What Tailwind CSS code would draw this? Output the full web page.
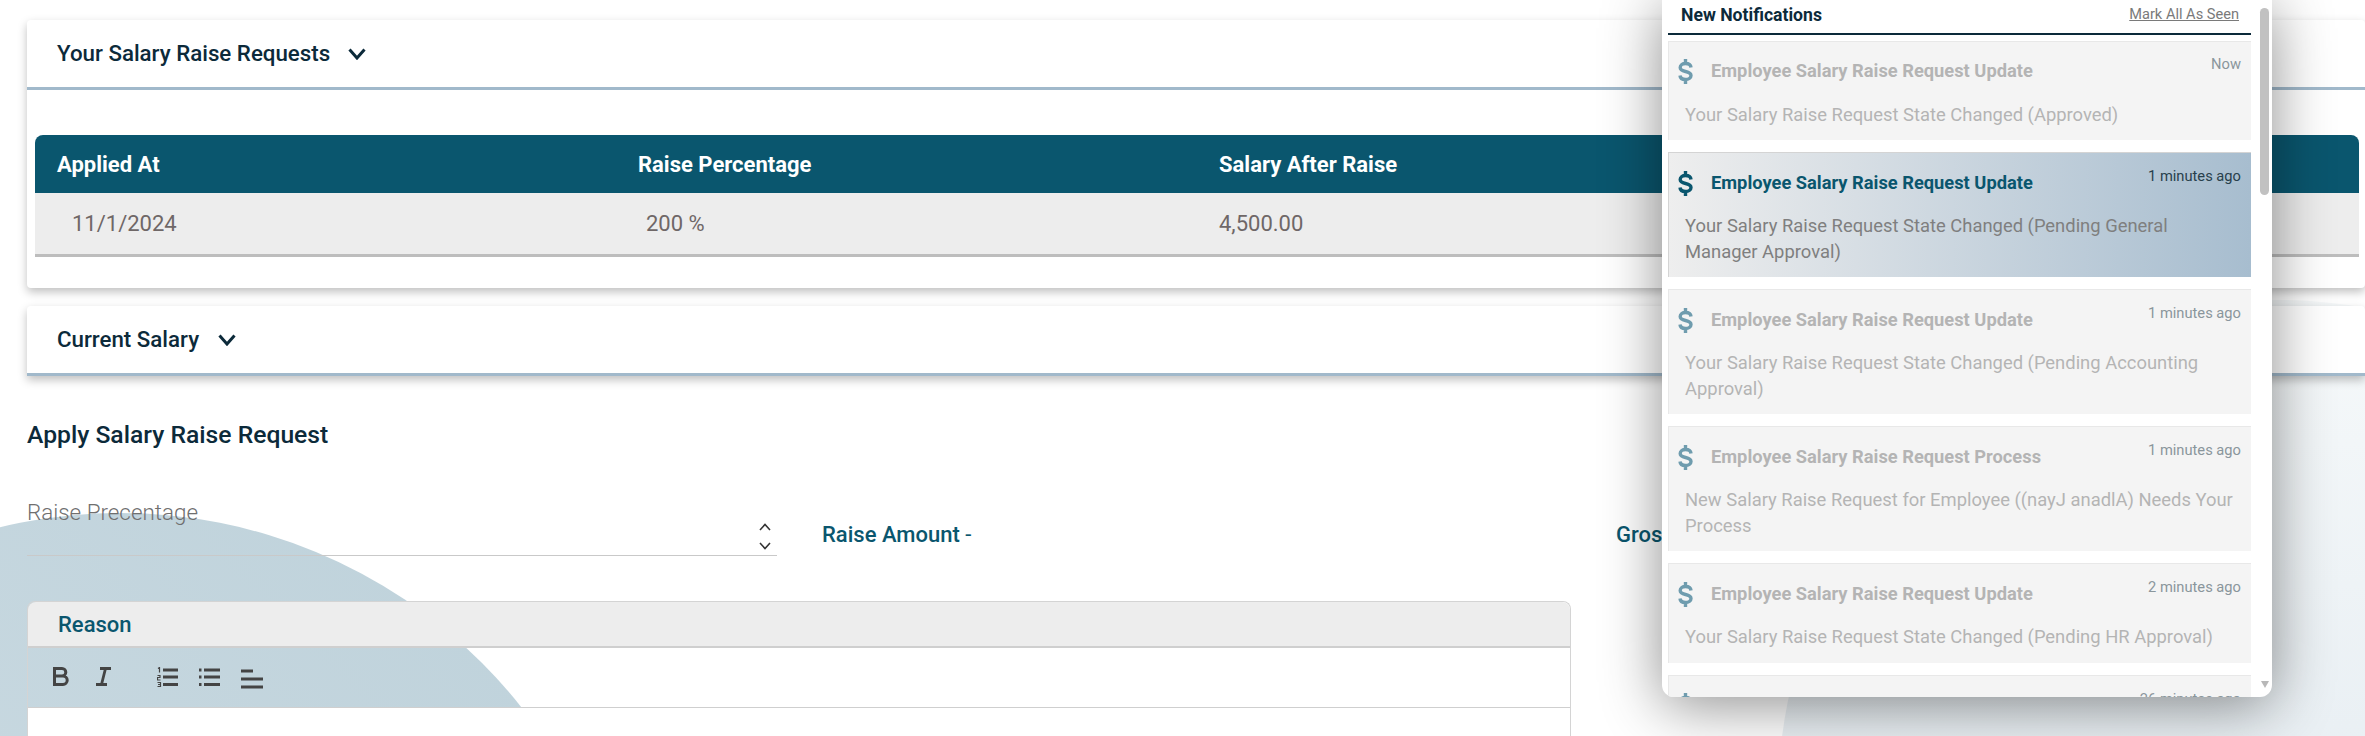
<!DOCTYPE html>
<html lang="en">
  <head>
    <meta charset="UTF-8" />
    <title>Salary Raise</title>
    <script src="https://cdn.jsdelivr.net/npm/@tailwindcss/browser@4"></script>
  </head>
  <body class="relative h-[736px] w-[2365px] overflow-hidden bg-white font-['Roboto',sans-serif]">
    <!-- background shapes -->
    <div class="absolute left-[-392px] top-[513px] h-[1024px] w-[1024px] rounded-full bg-gradient-to-tr from-[#d3e0e7] to-[#bdd1da]"></div>
    <div class="absolute left-[1778px] top-[300px] h-[1000px] w-[1000px] rounded-full bg-gradient-to-b from-[#f6f9fa] to-[#dae4ec]"></div>

    <div class="relative flex h-[736px] flex-col overflow-hidden pl-[27px] pt-[20px]">
      <!-- requests card -->
      <section class="h-[268px] w-[2338px] shrink-0 rounded-[4px] bg-white shadow-[0_4px_10px_rgba(0,0,0,0.25)]">
        <div class="flex h-[67px] items-center gap-[18px] pl-[30px] text-[22.3px] font-medium text-[#0c2a3a]">
          <span>Your Salary Raise Requests</span>
          <svg width="18" height="12" viewBox="0 0 18 12" fill="none" stroke="#0c2a3a" stroke-width="3"><path d="M1.500 1.500L9 10l7.500-8.500" /></svg>
        </div>
        <div class="h-[3px] bg-[#a1b9cb]"></div>
        <div class="ml-[8px] mr-[6px] mt-[45px]">
          <div class="grid h-[58px] grid-cols-[581px_581px_1fr] items-center rounded-t-[8px] bg-[#0a566e] pl-[22px] text-[22px] font-bold text-white">
            <span>Applied At</span><span>Raise Percentage</span><span>Salary After Raise</span>
          </div>
          <div class="grid h-[64px] grid-cols-[581px_581px_1fr] items-center border-b-[3px] border-[#bdbdbd] bg-[#ededed] pl-[22px] text-[22px] text-[#6f6767]">
            <span class="pl-[15px]">11/1/2024</span><span class="pl-[8px]">200 %</span><span>4,500.00</span>
          </div>
        </div>
      </section>

      <!-- current salary card -->
      <section class="mt-[18px] w-[2338px] shrink-0 rounded-t-[4px] bg-white shadow-[0_4px_10px_rgba(0,0,0,0.25)]">
        <div class="flex h-[67px] items-center gap-[19px] pl-[30px] text-[22.3px] font-medium text-[#0c2a3a]">
          <span>Current Salary</span>
          <svg width="18" height="12" viewBox="0 0 18 12" fill="none" stroke="#0c2a3a" stroke-width="3"><path d="M1.500 1.500L9 10l7.500-8.500" /></svg>
        </div>
        <div class="h-[3px] bg-[#a1b9cb]"></div>
      </section>

      <h2 class="mt-[44px] shrink-0 text-[24.7px] font-medium leading-[30px] text-[#0c2a3a]">Apply Salary Raise Request</h2>

      <!-- raise form row -->
      <div class="mt-[40px] flex h-[66px] shrink-0 items-start">
        <div class="relative h-[66px] w-[750px] border-b border-[#c9c9c9]">
          <span class="absolute left-0 top-[7px] text-[22.4px] font-light leading-[30px] text-[#6f6f6f]">Raise Precentage</span>
          <div class="absolute bottom-[5px] right-[6px] flex w-[12px] flex-col items-center gap-[11px]">
            <svg width="12" height="8" viewBox="0 0 12 8" fill="none" stroke="#333" stroke-width="1.6"><path d="M1 7l5-5.500L11 7" /></svg>
            <svg width="12" height="8" viewBox="0 0 12 8" fill="none" stroke="#333" stroke-width="1.6"><path d="M1 1l5 5.500L11 1" /></svg>
          </div>
        </div>
        <div class="ml-[45px] mt-[30px] w-[794px] text-[22px] font-medium leading-[30px] text-[#0a566e]">Raise Amount <span class="font-normal">-</span></div>
        <div class="mt-[30px] text-[22px] font-medium leading-[30px] text-[#0a566e]">Gross</div>
      </div>

      <!-- reason editor -->
      <div class="mt-[45px] w-[1544px] shrink-0 rounded-t-[8px] border-x border-t border-[#d4d4d4]">
        <div class="flex h-[46px] items-center rounded-t-[8px] border-b-2 border-[#cfcfcf] bg-[#ededed] pl-[30px] text-[22px] font-medium text-[#0a566e]">Reason</div>
        <div class="flex h-[60px] items-start border-b border-[#cfcfcf] pl-[25px] pt-[19px]">
          <svg width="16" height="19" viewBox="0 0 16 19" fill="none" stroke="#444" stroke-width="3"><path d="M1.500 1.500h7.500a3.800 3.800 0 010 7.600H1.500zM1.500 9.100h8.500a4.200 4.200 0 010 8.400H1.500z" /></svg>
          <svg class="ml-[27px]" width="15" height="19" viewBox="0 0 15 19" fill="none" stroke="#444" stroke-width="2.800"><path d="M4 1.500h11M0 17.500h11M9.500 1.500l-4 16" /></svg>
          <svg class="ml-[46px]" width="21" height="20" viewBox="0 0 21 20" fill="none" stroke="#444"><path d="M6 3h15M6 10h15M6 17.500h15" stroke-width="2.800" /><path d="M1 1.500l1.500-1v5M.5 8.500h2.500v2H.5v2.500h3M.5 15.500h3v4h-3M1 17.500h2.500" stroke-width="1.200" /></svg>
          <svg class="ml-[21px]" width="21" height="20" viewBox="0 0 21 20" fill="none" stroke="#444" stroke-width="2.800"><path d="M5 3h16M5 10h16M5 17.500h16M0 3h2.500M0 10h2.500M0 17.500h2.500" /></svg>
          <svg class="ml-[21px] mt-[2px]" width="22" height="20" viewBox="0 0 22 20" fill="none" stroke="#444" stroke-width="3"><path d="M0 2h12M0 10h22M0 18h22" /></svg>
        </div>
        <div class="h-[40px] bg-white"></div>
      </div>
    </div>

    <!-- notifications dropdown -->
    <aside class="absolute left-[1662px] top-0 h-[697px] w-[610px] overflow-hidden rounded-b-[12px] bg-white pl-[6px] shadow-[0_8px_60px_rgba(0,0,0,0.45)]">
      <div class="mr-[21px] flex h-[35px] items-center justify-between border-b-2 border-[#0c2a3a] pb-[3px] pl-[13px] pr-[12px]">
        <span class="text-[17.6px] font-bold text-[#0c2a3a]">New Notifications</span>
        <span class="text-[14.6px] text-[#7a7a7a] underline">Mark All As Seen</span>
      </div>
      <div class="mr-[21px] flex flex-col gap-[12px] pt-[6px]">
        <article class="h-[99px] border-l border-t border-[#e8e8e8] bg-[#f4f4f4] pl-[9px] pr-[10px] pt-[8px]">
          <header class="flex items-start">
            <svg class="mt-[9px] shrink-0" width="15" height="25" viewBox="0 0 15 25" fill="none" stroke="#6f9cae" stroke-width="3.400"><path d="M13 8.500C12.800 5.800 10.500 4.500 7.500 4.500 4.500 4.500 2.200 6 2.200 8.500c0 2.500 2.300 3.300 5.300 4 3 .7 5.500 1.500 5.500 4 0 2.500-2.500 4-5.500 4-3 0-5.300-1.500-5.500-4M7.500 0v4.500M7.500 20.500V25" /></svg>
            <h3 class="ml-[18px] mt-[7px] flex-1 text-[18.3px] font-bold text-[#b4b4b4]">Employee Salary Raise Request Update</h3>
            <time class="mt-[3px] text-[14.7px] text-[#8a969c]">Now</time>
          </header>
          <p class="mt-[18px] pl-[7px] pr-[4px] text-[18.4px] leading-[26px] text-[#b4b4b4]">Your Salary Raise Request State Changed (Approved)</p>
        </article>
        <article class="h-[125px] border-l border-t border-[#d4d4d4] bg-gradient-to-r from-[#eeeeee] to-[#a7bdcf] pl-[9px] pr-[10px] pt-[8px]">
          <header class="flex items-start">
            <svg class="mt-[10px] shrink-0" width="15" height="25" viewBox="0 0 15 25" fill="none" stroke="#0a566e" stroke-width="3.400"><path d="M13 8.500C12.800 5.800 10.500 4.500 7.500 4.500 4.500 4.500 2.200 6 2.200 8.500c0 2.500 2.300 3.300 5.300 4 3 .7 5.500 1.500 5.500 4 0 2.500-2.500 4-5.500 4-3 0-5.300-1.500-5.500-4M7.500 0v4.500M7.500 20.500V25" /></svg>
            <h3 class="ml-[18px] mt-[8px] flex-1 text-[18.3px] font-bold text-[#0a566e]">Employee Salary Raise Request Update</h3>
            <time class="mt-[4px] text-[14.7px] text-[#28404c]">1 minutes ago</time>
          </header>
          <p class="mt-[17px] pl-[7px] pr-[4px] text-[18.4px] leading-[26px] text-[#7f7f7f]">Your Salary Raise Request State Changed (Pending General Manager Approval)</p>
        </article>
        <article class="h-[125px] border-l border-t border-[#e8e8e8] bg-[#f4f4f4] pl-[9px] pr-[10px] pt-[8px]">
          <header class="flex items-start">
            <svg class="mt-[10px] shrink-0" width="15" height="25" viewBox="0 0 15 25" fill="none" stroke="#6f9cae" stroke-width="3.400"><path d="M13 8.500C12.800 5.800 10.500 4.500 7.500 4.500 4.500 4.500 2.200 6 2.200 8.500c0 2.500 2.300 3.300 5.300 4 3 .7 5.500 1.500 5.500 4 0 2.500-2.500 4-5.500 4-3 0-5.300-1.500-5.500-4M7.500 0v4.500M7.500 20.500V25" /></svg>
            <h3 class="ml-[18px] mt-[8px] flex-1 text-[18.3px] font-bold text-[#b4b4b4]">Employee Salary Raise Request Update</h3>
            <time class="mt-[4px] text-[14.7px] text-[#8a969c]">1 minutes ago</time>
          </header>
          <p class="mt-[17px] pl-[7px] pr-[4px] text-[18.4px] leading-[26px] text-[#b4b4b4]">Your Salary Raise Request State Changed (Pending Accounting Approval)</p>
        </article>
        <article class="h-[125px] border-l border-t border-[#e8e8e8] bg-[#f4f4f4] pl-[9px] pr-[10px] pt-[8px]">
          <header class="flex items-start">
            <svg class="mt-[10px] shrink-0" width="15" height="25" viewBox="0 0 15 25" fill="none" stroke="#6f9cae" stroke-width="3.400"><path d="M13 8.500C12.800 5.800 10.500 4.500 7.500 4.500 4.500 4.500 2.200 6 2.200 8.500c0 2.500 2.300 3.300 5.300 4 3 .7 5.500 1.500 5.500 4 0 2.500-2.500 4-5.500 4-3 0-5.300-1.500-5.500-4M7.500 0v4.500M7.500 20.500V25" /></svg>
            <h3 class="ml-[18px] mt-[8px] flex-1 text-[18.3px] font-bold text-[#b4b4b4]">Employee Salary Raise Request Process</h3>
            <time class="mt-[4px] text-[14.7px] text-[#8a969c]">1 minutes ago</time>
          </header>
          <p class="mt-[17px] pl-[7px] pr-[4px] text-[18.4px] leading-[26px] text-[#b4b4b4]">New Salary Raise Request for Employee ((nayJ anadlA) Needs Your Process</p>
        </article>
        <article class="h-[100px] border-l border-t border-[#e8e8e8] bg-[#f4f4f4] pl-[9px] pr-[10px] pt-[8px]">
          <header class="flex items-start">
            <svg class="mt-[10px] shrink-0" width="15" height="25" viewBox="0 0 15 25" fill="none" stroke="#6f9cae" stroke-width="3.400"><path d="M13 8.500C12.800 5.800 10.500 4.500 7.500 4.500 4.500 4.500 2.200 6 2.200 8.500c0 2.500 2.300 3.300 5.300 4 3 .7 5.500 1.500 5.500 4 0 2.500-2.500 4-5.500 4-3 0-5.300-1.500-5.500-4M7.500 0v4.500M7.500 20.500V25" /></svg>
            <h3 class="ml-[18px] mt-[8px] flex-1 text-[18.3px] font-bold text-[#b4b4b4]">Employee Salary Raise Request Update</h3>
            <time class="mt-[4px] text-[14.7px] text-[#8a969c]">2 minutes ago</time>
          </header>
          <p class="mt-[17px] pl-[7px] pr-[4px] text-[18.4px] leading-[26px] text-[#b4b4b4]">Your Salary Raise Request State Changed (Pending HR Approval)</p>
        </article>
        <article class="h-[99px] border-l border-t border-[#e8e8e8] bg-[#f4f4f4] pl-[9px] pr-[10px] pt-[8px]">
          <header class="flex items-start">
            <svg class="mt-[9px] shrink-0" width="15" height="25" viewBox="0 0 15 25" fill="none" stroke="#6f9cae" stroke-width="3.400"><path d="M13 8.500C12.800 5.800 10.500 4.500 7.500 4.500 4.500 4.500 2.200 6 2.200 8.500c0 2.500 2.300 3.300 5.300 4 3 .7 5.500 1.500 5.500 4 0 2.500-2.500 4-5.500 4-3 0-5.300-1.500-5.500-4M7.500 0v4.500M7.500 20.500V25" /></svg>
            <span class="flex-1"></span>
            <time class="mt-[4px] text-[14.7px] text-[#8a969c]">26 minutes ago</time>
          </header>
        </article>
      </div>
      <!-- scrollbar -->
      <div class="absolute right-[3px] top-[8px] h-[187px] w-[9px] rounded-full bg-[#c1c1c1]"></div>
      <div class="absolute bottom-[9px] right-[3px] h-0 w-0 border-x-[4.5px] border-t-[7px] border-x-transparent border-t-[#b8b8b8]"></div>
    </aside>
  </body>
</html>
